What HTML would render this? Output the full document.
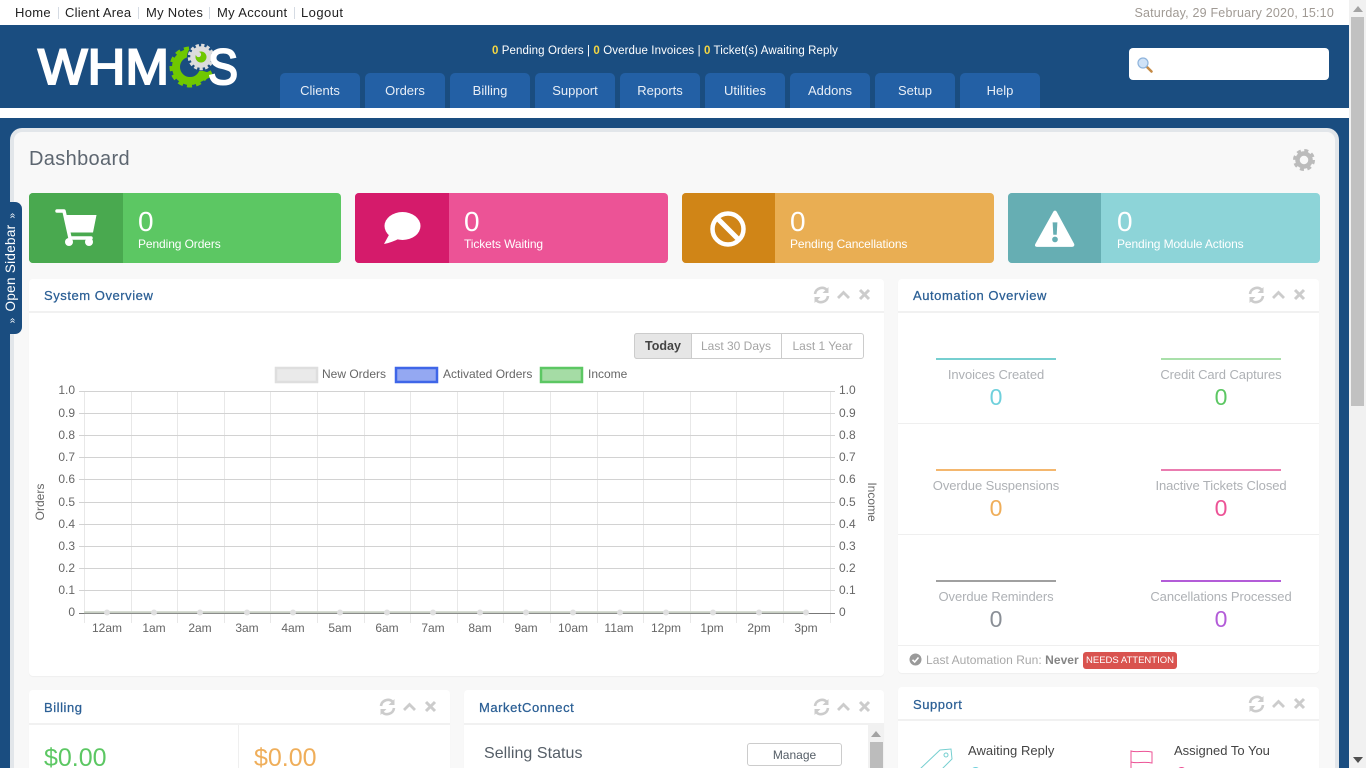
<!DOCTYPE html>
<html><head><meta charset="utf-8"><title>Dashboard</title>
<style>
*{box-sizing:border-box}
html,body{margin:0;padding:0;width:1366px;height:768px;overflow:hidden;background:#1a4d80;font-family:"Liberation Sans",Arial,sans-serif}
#w{position:relative;width:1366px;height:768px;overflow:hidden;background:#1a4d80}
.a{position:absolute}
.t{position:absolute;white-space:nowrap;line-height:20px;height:20px}
.c{text-align:center;transform:translateX(-50%)}
.tab{position:absolute;top:73px;width:80px;height:35px;background:#2360a5;border-radius:5px 5px 0 0;color:#e8eef6;font-size:13px;line-height:35px;text-align:center}
.card{position:absolute;top:193px;height:70px;border-radius:4px;overflow:hidden;color:#fff}
.card .ic{position:absolute;left:0;top:0;width:94px;height:70px}
.card .n{position:absolute;left:109px;top:14px;font-size:28px;line-height:30px}
.card .l{position:absolute;left:109px;top:43px;font-size:12px;line-height:16px;white-space:nowrap;letter-spacing:-.1px}
.p{position:absolute;background:#fff;border-radius:4px;box-shadow:0 1px 1px rgba(0,0,0,.04);overflow:hidden}
.h{position:absolute;left:0;right:0;top:0;height:34px;border-bottom:2px solid #f1f1f1}
.h b{position:absolute;left:15px;top:7px;font-weight:normal;font-size:13px;line-height:20px;color:#2b5f95;letter-spacing:.55px;white-space:nowrap;-webkit-text-stroke:.25px #2b5f95}
.h svg{position:absolute;top:7px;right:9px}
.h.d b{top:8px}
.h.d svg{top:8px}
.bar{position:absolute;width:120px;height:2px}
.al{position:absolute;width:200px;text-align:center;font-size:13px;line-height:18px;color:#aeb1b5;letter-spacing:-.08px;white-space:nowrap}
.av{position:absolute;width:200px;text-align:center;font-size:23px;line-height:26px}
</style></head><body><div id="w">

<!-- top bar -->
<div class="a" style="left:0;top:0;width:1349px;height:25px;background:#fff"></div>
<div class="t" style="left:15px;top:3px;font-size:13px;color:#222;letter-spacing:.3px">Home</div>
<div class="a" style="left:58px;top:7px;width:1px;height:12px;background:#d5dbe3"></div>
<div class="t" style="left:65px;top:3px;font-size:13px;color:#222;letter-spacing:.25px">Client Area</div>
<div class="a" style="left:138px;top:7px;width:1px;height:12px;background:#d5dbe3"></div>
<div class="t" style="left:146px;top:3px;font-size:13px;color:#222;letter-spacing:.28px">My Notes</div>
<div class="a" style="left:209px;top:7px;width:1px;height:12px;background:#d5dbe3"></div>
<div class="t" style="left:217px;top:3px;font-size:13px;color:#222;letter-spacing:.33px">My Account</div>
<div class="a" style="left:294px;top:7px;width:1px;height:12px;background:#d5dbe3"></div>
<div class="t" style="left:301px;top:3px;font-size:13px;color:#222;letter-spacing:.45px">Logout</div>
<div class="t" style="right:32px;top:3px;font-size:12.5px;color:#a09a94;letter-spacing:.2px">Saturday, 29 February 2020, 15:10</div>

<!-- header -->
<div class="a" style="left:0;top:25px;width:1349px;height:83px;background:#1a4d80"></div>
<div class="a" style="left:0;top:108px;width:1349px;height:10px;background:#fff"></div>

<svg class="a" style="left:30px;top:35px" width="215" height="65" viewBox="30 35 215 65">
<text x="38" y="84" font-family="Liberation Sans" font-size="50" fill="#fff" stroke="#fff" stroke-width="2" textLength="131" lengthAdjust="spacingAndGlyphs">WHM</text>
<circle cx="190" cy="67" r="14" fill="none" stroke="#6fc800" stroke-width="8"/>
<circle cx="190" cy="67" r="18.500" fill="none" stroke="#6fc800" stroke-width="4" stroke-dasharray="5 4"/>
<path d="M193 68L220 44L222 74L210 73Z" fill="#1a4d80"/>
<path d="M198 80L212 73" stroke="#6fc800" stroke-width="6"/>
<circle cx="201" cy="57" r="14" fill="#1a4d80"/>
<circle cx="201" cy="57" r="8" fill="none" stroke="#dcdcdc" stroke-width="5.500"/>
<circle cx="201" cy="57" r="11.500" fill="none" stroke="#dcdcdc" stroke-width="3.500" stroke-dasharray="3.200 2.200"/>
<circle cx="201" cy="57" r="5.500" fill="#6fc800"/>
<circle cx="198.500" cy="54.500" r="2.600" fill="#dcdcdc"/>
<text x="208" y="84" font-family="Liberation Sans" font-size="50" fill="#fff" stroke="#fff" stroke-width="2" textLength="30" lengthAdjust="spacingAndGlyphs">S</text>
</svg>

<div class="t c" style="left:665px;top:41px;font-size:11.5px;color:#fff;font-weight:normal;letter-spacing:.1px"><span style="color:#f5d742;font-weight:bold">0</span> Pending Orders | <span style="color:#f5d742;font-weight:bold">0</span> Overdue Invoices | <span style="color:#f5d742;font-weight:bold">0</span> Ticket(s) Awaiting Reply</div>

<div class="tab" style="left:280px">Clients</div>
<div class="tab" style="left:365px">Orders</div>
<div class="tab" style="left:450px">Billing</div>
<div class="tab" style="left:535px">Support</div>
<div class="tab" style="left:620px">Reports</div>
<div class="tab" style="left:705px">Utilities</div>
<div class="tab" style="left:790px">Addons</div>
<div class="tab" style="left:875px">Setup</div>
<div class="tab" style="left:960px">Help</div>

<div class="a" style="left:1129px;top:48px;width:200px;height:32px;background:#fff;border-radius:4px"></div>
<svg class="a" style="left:1136px;top:56px" width="18" height="18" viewBox="0 0 18 18">
<path d="M10.5 10.5L15.5 15.5" stroke="#c58a45" stroke-width="2.6" stroke-linecap="round"/>
<circle cx="7" cy="7" r="5" fill="#cfe2f7" stroke="#8fb4dc" stroke-width="1.2"/>
</svg>

<!-- main panel -->
<div class="a" style="left:10px;top:128px;width:1329px;height:660px;background:#f8f8f8;border:4px solid #e2e6ea;border-bottom:0;border-radius:12px 12px 0 0"></div>

<div class="t" style="left:29px;top:147px;height:24px;line-height:24px;font-size:20px;color:#5d6670;letter-spacing:.35px">Dashboard</div>
<svg class="a" style="left:1293px;top:149px" width="22" height="22" viewBox="0 0 22 22">
<circle cx="11" cy="11" r="6.500" fill="none" stroke="#bbb" stroke-width="4.500"/>
<circle cx="11" cy="11" r="9.500" fill="none" stroke="#bbb" stroke-width="3" stroke-dasharray="4 3.460"/>
</svg>

<!-- stat cards -->
<div class="card" style="left:29px;width:312px;background:#5cc763">
 <div class="ic" style="background:#49a94f"></div>
 <svg class="a" style="left:26px;top:15px" width="44" height="40" viewBox="0 0 44 40">
  <path d="M2 3H9L15 30H36" fill="none" stroke="#fff" stroke-width="3.500" stroke-linecap="round" stroke-linejoin="round"/>
  <path d="M10 7H41.500L38 24.500H14Z" fill="#fff"/>
  <circle cx="14" cy="34" r="4" fill="#fff"/><circle cx="34" cy="34" r="4" fill="#fff"/>
 </svg>
 <div class="n">0</div><div class="l">Pending Orders</div>
</div>
<div class="card" style="left:355px;width:313px;background:#ec5396">
 <div class="ic" style="background:#d51b6b"></div>
 <svg class="a" style="left:28px;top:18px" width="38" height="34" viewBox="0 0 38 34">
  <ellipse cx="19.500" cy="15" rx="18" ry="14" fill="#fff"/><path d="M7 22L1 33C6 32 12 30 17 27Z" fill="#fff"/>
 </svg>
 <div class="n">0</div><div class="l">Tickets Waiting</div>
</div>
<div class="card" style="left:682px;width:312px;background:#e9ae53">
 <div class="ic" style="background:#d08517;width:93px"></div>
 <svg class="a" style="left:27px;top:18px" width="38" height="36" viewBox="0 0 38 36">
  <circle cx="19" cy="18" r="15.500" fill="none" stroke="#fff" stroke-width="4.500"/><path d="M8 7L30 29" stroke="#fff" stroke-width="5"/>
 </svg>
 <div class="n" style="left:108px">0</div><div class="l" style="left:108px">Pending Cancellations</div>
</div>
<div class="card" style="left:1008px;width:312px;background:#8dd4d8">
 <div class="ic" style="background:#66aeb3;width:93px"></div>
 <svg class="a" style="left:26px;top:17px" width="42" height="38" viewBox="0 0 44 40">
  <path d="M21 2Q22 1 23 2L41.500 36Q42 38 40 38H3Q1 38 2 36Z" fill="#fff" stroke="#fff" stroke-width="1.500" stroke-linejoin="round"/>
  <path d="M19.500 13H24.500L23.800 26H20.200Z" fill="#66aeb3"/><circle cx="22" cy="31" r="3" fill="#66aeb3"/>
 </svg>
 <div class="n">0</div><div class="l">Pending Module Actions</div>
</div>

<!-- System Overview -->
<div class="p" style="left:29px;top:279px;width:855px;height:397px">
 <div class="h"><b>System Overview</b>
 <svg width="62" height="18" viewBox="0 0 62 18" fill="none" stroke="#ccc"><path d="M2 8A7 7 0 0 1 14 4M15 10A7 7 0 0 1 3 14" stroke-width="2.600"/><path d="M15.500 1V7H9.500ZM1.500 17V11H7.500Z" fill="#ccc" stroke="none"/><path d="M25 12L30.500 6.500L36 12" stroke-width="2.800"/><path d="M47 4L56 13M56 4L47 13" stroke-width="3"/></svg></div>
 <div class="a" style="left:605px;top:54px;width:230px;height:26px;border:1px solid #ccc;border-radius:3px;background:#fff"></div>
 <div class="a" style="left:605px;top:54px;width:58px;height:26px;border:1px solid #ccc;border-radius:3px 0 0 3px;background:#e6e6e6;color:#444;font-weight:bold;font-size:12.500px;line-height:24px;text-align:center">Today</div>
 <div class="a" style="left:662px;top:54px;width:91px;height:26px;border-right:1px solid #ccc;color:#a4a4a4;font-size:12px;line-height:26px;text-align:center">Last 30 Days</div>
 <div class="a" style="left:752px;top:54px;width:83px;height:26px;color:#a4a4a4;font-size:12px;line-height:26px;text-align:center">Last 1 Year</div>
</div>

<svg class="a" style="left:29px;top:360px" width="855" height="280" viewBox="29 360 855 280" font-family="Liberation Sans" font-size="12" fill="#666">
<rect x="276" y="368" width="41" height="14" fill="#eaeaea" stroke="#dedede" stroke-width="2.500"/>
<text x="322" y="378">New Orders</text>
<rect x="396" y="368" width="41" height="14" fill="#94a8f2" stroke="#3f66e8" stroke-width="2.500"/>
<text x="443" y="378">Activated Orders</text>
<rect x="541" y="368" width="41" height="14" fill="#a5dca5" stroke="#5cc763" stroke-width="2.500"/>
<text x="588" y="378">Income</text>
<path d="M84.500 391V623M131.500 391V623M177.500 391V623M224.500 391V623M270.500 391V623M317.500 391V623M364.500 391V623M410.500 391V623M457.500 391V623M503.500 391V623M550.500 391V623M597.500 391V623M643.500 391V623M690.500 391V623M736.500 391V623M783.500 391V623M830.500 391V623" stroke="#e8e8e8" stroke-width="1" fill="none"/>
<path d="M79 391.500H835M79 413.500H835M79 435.500H835M79 457.500H835M79 479.500H835M79 502.500H835M79 524.500H835M79 546.500H835M79 568.500H835M79 590.500H835" stroke="#d2d2d2" stroke-width="1" fill="none"/>
<path d="M79 613.500H835" stroke="#777" stroke-width="1" fill="none"/>
<path d="M84 612.300H807" stroke="#c8cfc4" stroke-width="2" fill="none"/>
<g fill="#e0e0e0"><circle cx="107" cy="612.500" r="3"/><circle cx="154" cy="612.500" r="3"/><circle cx="200" cy="612.500" r="3"/><circle cx="247" cy="612.500" r="3"/><circle cx="293" cy="612.500" r="3"/><circle cx="340" cy="612.500" r="3"/><circle cx="387" cy="612.500" r="3"/><circle cx="433" cy="612.500" r="3"/><circle cx="480" cy="612.500" r="3"/><circle cx="526" cy="612.500" r="3"/><circle cx="573" cy="612.500" r="3"/><circle cx="620" cy="612.500" r="3"/><circle cx="666" cy="612.500" r="3"/><circle cx="713" cy="612.500" r="3"/><circle cx="759" cy="612.500" r="3"/><circle cx="806" cy="612.500" r="3"/></g>
<g text-anchor="end"><text x="75" y="394">1.0</text><text x="75" y="417">0.9</text><text x="75" y="439">0.8</text><text x="75" y="461">0.7</text><text x="75" y="483">0.6</text><text x="75" y="506">0.5</text><text x="75" y="528">0.4</text><text x="75" y="550">0.3</text><text x="75" y="572">0.2</text><text x="75" y="594">0.1</text><text x="75" y="616">0</text></g>
<g><text x="839" y="394">1.0</text><text x="839" y="417">0.9</text><text x="839" y="439">0.8</text><text x="839" y="461">0.7</text><text x="839" y="483">0.6</text><text x="839" y="506">0.5</text><text x="839" y="528">0.4</text><text x="839" y="550">0.3</text><text x="839" y="572">0.2</text><text x="839" y="594">0.1</text><text x="839" y="616">0</text></g>
<g text-anchor="middle"><text x="107" y="632">12am</text><text x="154" y="632">1am</text><text x="200" y="632">2am</text><text x="247" y="632">3am</text><text x="293" y="632">4am</text><text x="340" y="632">5am</text><text x="387" y="632">6am</text><text x="433" y="632">7am</text><text x="480" y="632">8am</text><text x="526" y="632">9am</text><text x="573" y="632">10am</text><text x="619" y="632">11am</text><text x="666" y="632">12pm</text><text x="712" y="632">1pm</text><text x="759" y="632">2pm</text><text x="806" y="632">3pm</text></g>
<text transform="translate(44,502) rotate(-90)" text-anchor="middle">Orders</text>
<text transform="translate(868,502) rotate(90)" text-anchor="middle">Income</text>
</svg>

<!-- Automation Overview -->
<div class="p" style="left:898px;top:279px;width:421px;height:394px">
 <div class="h"><b>Automation Overview</b>
 <svg width="62" height="18" viewBox="0 0 62 18" fill="none" stroke="#ccc"><path d="M2 8A7 7 0 0 1 14 4M15 10A7 7 0 0 1 3 14" stroke-width="2.600"/><path d="M15.500 1V7H9.500ZM1.500 17V11H7.500Z" fill="#ccc" stroke="none"/><path d="M25 12L30.500 6.500L36 12" stroke-width="2.800"/><path d="M47 4L56 13M56 4L47 13" stroke-width="3"/></svg></div>
 <div class="bar" style="left:38px;top:79px;background:#76cfd0"></div>
 <div class="al" style="left:-2px;top:87px">Invoices Created</div><div class="av" style="left:-2px;top:105px;color:#6fd0dc">0</div>
 <div class="bar" style="left:263px;top:79px;background:#a9e0aa"></div>
 <div class="al" style="left:223px;top:87px">Credit Card Captures</div><div class="av" style="left:223px;top:105px;color:#5cc763">0</div>
 <div class="a" style="left:0;top:144px;width:421px;height:1px;background:#efefef"></div>
 <div class="bar" style="left:38px;top:190px;background:#f4b76e"></div>
 <div class="al" style="left:-2px;top:198px">Overdue Suspensions</div><div class="av" style="left:-2px;top:216px;color:#efae5a">0</div>
 <div class="bar" style="left:263px;top:190px;background:#ea7cb0"></div>
 <div class="al" style="left:223px;top:198px">Inactive Tickets Closed</div><div class="av" style="left:223px;top:216px;color:#ec5396">0</div>
 <div class="a" style="left:0;top:255px;width:421px;height:1px;background:#efefef"></div>
 <div class="bar" style="left:38px;top:301px;background:#a0a0a0"></div>
 <div class="al" style="left:-2px;top:309px">Overdue Reminders</div><div class="av" style="left:-2px;top:327px;color:#8a8f96">0</div>
 <div class="bar" style="left:263px;top:301px;background:#b35cd8"></div>
 <div class="al" style="left:223px;top:309px">Cancellations Processed</div><div class="av" style="left:223px;top:327px;color:#b35cd8">0</div>
 <div class="a" style="left:0;top:366px;width:421px;height:1px;background:#efefef"></div>
 <svg class="a" style="left:11px;top:374px" width="13" height="13" viewBox="0 0 13 13"><circle cx="6.500" cy="6.500" r="6" fill="#9a9a9a"/><path d="M3.500 6.800L5.700 9L9.500 4.500" fill="none" stroke="#fff" stroke-width="1.600"/></svg>
 <div class="t" style="left:28px;top:371px;font-size:12px;color:#a8a8a8;letter-spacing:.05px">Last Automation Run: <b style="color:#858585">Never</b></div>
 <div class="a" style="left:185px;top:373px;width:94px;height:17px;background:#d9534f;border-radius:3px;color:#fff;font-size:9.500px;line-height:17px;text-align:center;white-space:nowrap">NEEDS ATTENTION</div>
</div>

<!-- Billing -->
<div class="p" style="left:29px;top:690px;width:421px;height:100px">
 <div class="h d" style="height:35px"><b>Billing</b>
 <svg width="62" height="18" viewBox="0 0 62 18" fill="none" stroke="#ccc"><path d="M2 8A7 7 0 0 1 14 4M15 10A7 7 0 0 1 3 14" stroke-width="2.600"/><path d="M15.500 1V7H9.500ZM1.500 17V11H7.500Z" fill="#ccc" stroke="none"/><path d="M25 12L30.500 6.500L36 12" stroke-width="2.800"/><path d="M47 4L56 13M56 4L47 13" stroke-width="3"/></svg></div>
 <div class="a" style="left:209px;top:35px;width:1px;height:60px;background:#efefef"></div>
 <div class="t" style="left:15px;top:52px;height:32px;line-height:32px;font-size:25px;color:#5cc763">$0.00</div>
 <div class="t" style="left:225px;top:52px;height:32px;line-height:32px;font-size:25px;color:#efae5a">$0.00</div>
</div>

<!-- MarketConnect -->
<div class="p" style="left:464px;top:690px;width:420px;height:100px">
 <div class="h d" style="height:35px"><b>MarketConnect</b>
 <svg width="62" height="18" viewBox="0 0 62 18" fill="none" stroke="#ccc"><path d="M2 8A7 7 0 0 1 14 4M15 10A7 7 0 0 1 3 14" stroke-width="2.600"/><path d="M15.500 1V7H9.500ZM1.500 17V11H7.500Z" fill="#ccc" stroke="none"/><path d="M25 12L30.500 6.500L36 12" stroke-width="2.800"/><path d="M47 4L56 13M56 4L47 13" stroke-width="3"/></svg></div>
 <div class="t" style="left:20px;top:54px;font-size:16px;color:#555e67;letter-spacing:.05px">Selling Status</div>
 <div class="a" style="left:283px;top:53px;width:95px;height:23px;border:1px solid #ccc;border-radius:3px;font-size:12px;line-height:23px;color:#555e67;text-align:center">Manage</div>
 <div class="a" style="left:404px;top:35px;width:16px;height:60px;background:#f1f1f1"></div>
 <div class="a" style="left:406px;top:52px;width:13px;height:40px;background:#bcbcbc"></div>
 <svg class="a" style="left:407px;top:41px" width="10" height="6"><path d="M0 6L5 0L10 6Z" fill="#a3a3a3"/></svg>
</div>

<!-- Support -->
<div class="p" style="left:898px;top:687px;width:421px;height:100px">
 <div class="h d"><b>Support</b>
 <svg width="62" height="18" viewBox="0 0 62 18" fill="none" stroke="#ccc"><path d="M2 8A7 7 0 0 1 14 4M15 10A7 7 0 0 1 3 14" stroke-width="2.600"/><path d="M15.500 1V7H9.500ZM1.500 17V11H7.500Z" fill="#ccc" stroke="none"/><path d="M25 12L30.500 6.500L36 12" stroke-width="2.800"/><path d="M47 4L56 13M56 4L47 13" stroke-width="3"/></svg></div>
 <svg class="a" style="left:20px;top:60px" width="40" height="26" viewBox="0 0 40 26" fill="none" stroke="#76cfd0" stroke-width="1"><path d="M2 22L22 3L33 2L34 12L16 30"/><circle cx="28" cy="8" r="2"/></svg>
 <div class="t" style="left:70px;top:54px;font-size:13px;color:#444;letter-spacing:.05px">Awaiting Reply</div>
 <div class="t" style="left:72px;top:76px;font-size:20px;height:24px;line-height:24px;color:#6fd0dc">0</div>
 <svg class="a" style="left:230px;top:62px" width="26" height="24" viewBox="0 0 26 24" fill="none" stroke="#ec5396" stroke-width="1"><path d="M3 2C9 4 14 1 24 3V14C15 12 9 15 3 13ZM3 2V24"/></svg>
 <div class="t" style="left:276px;top:54px;font-size:13px;color:#444">Assigned To You</div>
 <div class="t" style="left:278px;top:76px;font-size:20px;height:24px;line-height:24px;color:#ec5396">0</div>
</div>

<!-- Open sidebar tab -->
<div class="a" style="left:0;top:202px;width:22px;height:132px;background:#1a4d80;border-radius:0 7px 7px 0"></div>
<div class="t" style="left:11px;top:268px;font-size:13.500px;color:#fff;transform:translate(-50%,-50%) rotate(-90deg);letter-spacing:.3px"><span style="font-size:10px;margin-right:6px">»</span>Open Sidebar<span style="font-size:10px;margin-left:6px">»</span></div>

<!-- page scrollbar -->
<div class="a" style="left:1349px;top:0;width:17px;height:768px;background:#f1f1f1"></div>
<div class="a" style="left:1351px;top:17px;width:13px;height:389px;background:#c1c1c1"></div>
<svg class="a" style="left:1353px;top:6px" width="10" height="6"><path d="M0 6L5 0L10 6Z" fill="#a3a3a3"/></svg>
<svg class="a" style="left:1353px;top:757px" width="10" height="6"><path d="M0 0L5 6L10 0Z" fill="#505050"/></svg>
</div></body></html>
